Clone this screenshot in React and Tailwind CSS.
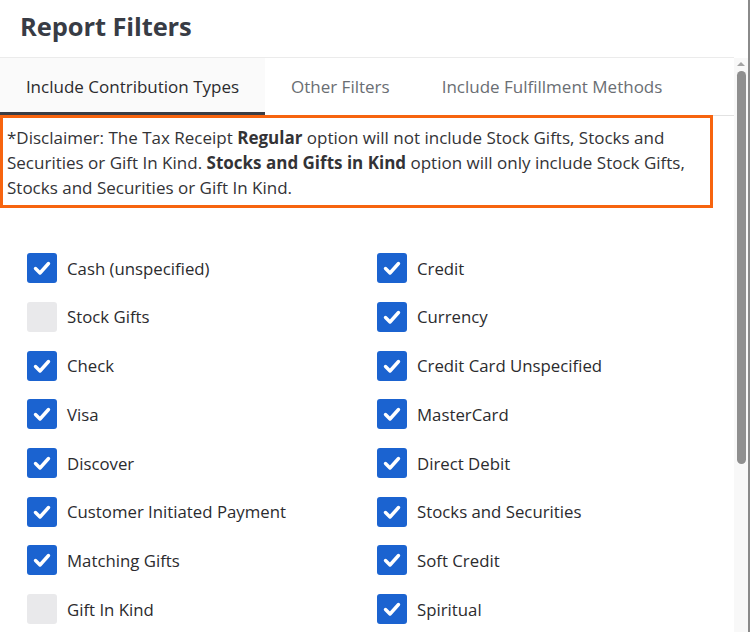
import React from 'react';

const left = [
    { label: 'Cash (unspecified)', on: true },
    { label: 'Stock Gifts', on: false },
    { label: 'Check', on: true },
    { label: 'Visa', on: true },
    { label: 'Discover', on: true },
    { label: 'Customer Initiated Payment', on: true },
    { label: 'Matching Gifts', on: true },
    { label: 'Gift In Kind', on: false },
];

const right = [
    { label: 'Credit', on: true },
    { label: 'Currency', on: true },
    { label: 'Credit Card Unspecified', on: true },
    { label: 'MasterCard', on: true },
    { label: 'Direct Debit', on: true },
    { label: 'Stocks and Securities', on: true },
    { label: 'Soft Credit', on: true },
    { label: 'Spiritual', on: true },
];

const Box = ({ on }) => (
    <div
        className={`w-[30px] h-[30px] rounded-[3px] flex items-center justify-center shrink-0 ${
            on ? 'bg-[#1b63d0]' : 'bg-[#e9e9eb]'
        }`}
    >
        {on && (
            <svg width="20" height="20" viewBox="0 0 20 20">
                <polyline
                    points="3.5,10.5 8,15 16.5,5.5"
                    fill="none"
                    stroke="#ffffff"
                    strokeWidth="3.4"
                    strokeLinecap="round"
                    strokeLinejoin="round"
                />
            </svg>
        )}
    </div>
);

const Column = ({ items }) => (
    <div className="flex flex-col">
        {items.map((it) => (
            <div key={it.label} className="h-[48.7px] shrink-0 flex items-center gap-[10px]">
                <Box on={it.on} />
                <span className="text-[16.8px] text-[#2b2b2e]">{it.label}</span>
            </div>
        ))}
    </div>
);

export default function App() {
    return (
        <div
            className="w-[750px] h-[632px] flex bg-white overflow-hidden"
            style={{ fontFamily: '"Open Sans", "Noto Sans", sans-serif' }}
        >
            <div className="w-[734px] flex flex-col">
                {/* Titre */}
                <div className="h-[58px] shrink-0 border-b border-[#ebebeb] px-[20px] pt-[7px]">
                    <h1 className="text-[25.5px] font-bold text-[#383c45] tracking-[-0.1px]">Report Filters</h1>
                </div>

                {/* Onglets */}
                <div className="h-[58px] shrink-0 flex border-b border-[#e2e2e2] text-[17px]">
                    <div className="w-[265px] pt-[3px] bg-[#fafafa] border-b-[3px] border-[#3a3d45] flex items-center justify-center text-[#2b2b2e]">
                        Include Contribution Types
                    </div>
                    <div className="pl-[26px] pt-[1px] flex items-center text-[#6a6e73]">Other Filters</div>
                    <div className="pl-[52px] pt-[1px] flex items-center text-[#6a6e73]">Include Fulfillment Methods</div>
                </div>

                {/* Avertissement */}
                <div className="w-[713px] shrink-0 -mt-[1px] border-[3px] border-[#f7640f] px-[4px] pt-[7px] pb-[5px] text-[17px] leading-[25px] text-[#333336]">
                    *Disclaimer: The Tax Receipt <b>Regular</b> option will not include Stock Gifts, Stocks and
                    <br />
                    Securities or Gift In Kind. <b>Stocks and Gifts in Kind</b> option will only include Stock Gifts,
                    <br />
                    Stocks and Securities or Gift In Kind.
                </div>

                <div className="grid shrink-0 grid-cols-[350px_1fr] pl-[27px] mt-[36px]">
                    <Column items={left} />
                    <Column items={right} />
                </div>
            </div>

            {/* Barre de défilement */}
            <div className="w-[14px] pt-[58px] flex flex-col">
                <div className="flex-1 bg-[#f8f8f8] flex flex-col items-center">
                    <svg width="10" height="8" viewBox="0 0 10 8" className="mt-[2px]">
                        <polygon points="1,6 5,2 9,6" fill="#a3a3a3" />
                    </svg>
                    <div className="w-[9px] h-[393px] mt-[3px] rounded-full bg-[#8f8f8f]" />
                </div>
            </div>
            <div className="w-[2px] bg-[#8a8a8a]" />
        </div>
    );
}
